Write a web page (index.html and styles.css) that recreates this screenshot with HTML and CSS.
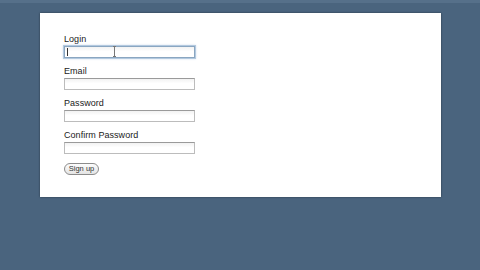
FILE: index.html
```html
<!DOCTYPE html>
<html lang="en">
<head>
    <meta charset="UTF-8">
    <title>Sign up</title>
    <link rel="stylesheet" href="styles.css">
</head>
<body>
    <div class="topstrip"></div>
    <div class="page">
        <form class="panel">
            <div class="form-group">
                <label for="login">Login</label>
                <div class="field-wrap">
                    <input type="text" id="login" class="focused">
                    <span class="caret"></span>
                    <span class="ibeam"></span>
                </div>
            </div>
            <div class="form-group">
                <label for="email">Email</label>
                <input type="text" id="email">
            </div>
            <div class="form-group">
                <label for="password">Password</label>
                <input type="password" id="password">
            </div>
            <div class="form-group">
                <label for="confirm">Confirm Password</label>
                <input type="password" id="confirm">
            </div>
            <button type="button">Sign up</button>
        </form>
    </div>
</body>
</html>
```

FILE: styles.css
```css
html, body {
    margin: 0;
    height: 100%;
}
body {
    background-color: #4a647e;
    font-family: 'Liberation Sans', Arial, sans-serif;
    overflow: hidden;
}
.topstrip {
    height: 3px;
    background-color: #56708a;
}
.page {
    padding: 10px 0 0 40px;
}
.panel {
    width: 401px;
    height: 184px;
    box-sizing: border-box;
    padding: 21px 24px 0;
    background: white;
    box-shadow: 0 0 2px rgba(0,0,0,0.45);
}
.form-group {
    margin-bottom: 8px;
}
label {
    display: block;
    font-size: 9px;
    line-height: 11px;
    color: #1a1a1a;
    letter-spacing: 0.05px;
}
.field-wrap {
    position: relative;
    width: 131px;
}
input {
    display: block;
    width: 131px;
    height: 12px;
    margin: 1px 0 0;
    padding: 0;
    box-sizing: border-box;
    border: 1px solid #bcbcbc;
    border-top-color: #9a9a9a;
    background: linear-gradient(#f2f2f2, #fff 45%);
    font-size: 9px;
    outline: none;
}
input.focused {
    border-color: #8aa6c1;
    box-shadow: 0 0 0 1px #b3c9df, 0 0 2px 1px #d3e0ee;
}
.caret {
    position: absolute;
    left: 3px;
    top: 2px;
    width: 1px;
    height: 8px;
    background: #333;
}
.ibeam {
    position: absolute;
    left: 50px;
    top: 0;
    width: 1px;
    height: 11px;
    background: #777;
}
.ibeam::before,
.ibeam::after {
    content: "";
    position: absolute;
    left: -1px;
    width: 3px;
    height: 1px;
    background: #777;
}
.ibeam::before { top: 0; }
.ibeam::after { bottom: 0; }
button {
    display: block;
    margin-top: 9px;
    width: 35px;
    height: 12px;
    padding: 0;
    border: 1px solid #8c8c8c;
    border-radius: 6px;
    background: linear-gradient(#fdfdfd, #e4e4e4);
    font-family: 'Liberation Sans', Arial, sans-serif;
    font-size: 7.5px;
    line-height: 10px;
    color: #333;
}
```
